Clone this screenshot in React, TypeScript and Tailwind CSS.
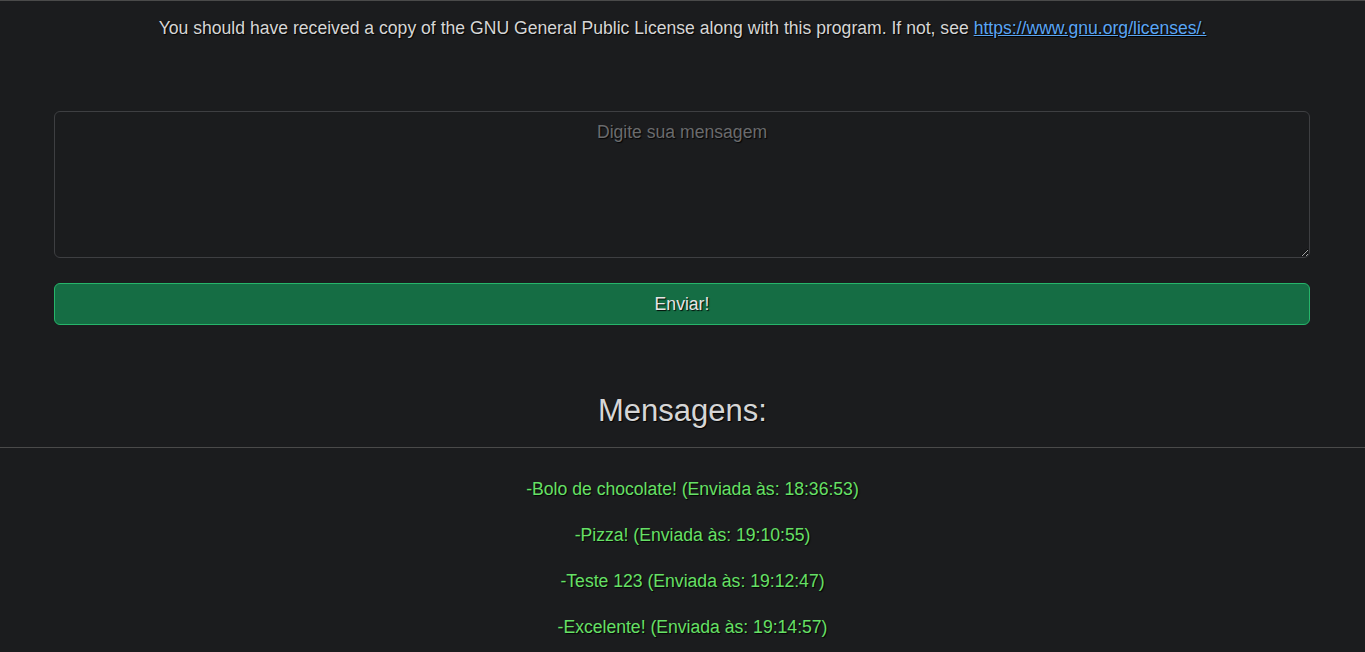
import React from "react";

const msgs = [
  "-Bolo de chocolate! (Enviada às: 18:36:53)",
  "-Pizza! (Enviada às: 19:10:55)",
  "-Teste 123 (Enviada às: 19:12:47)",
  "-Excelente! (Enviada às: 19:14:57)",
];

export default function App() {
  return (
    <div
      className="min-h-screen bg-[#1b1c1e] text-center text-[#d6d6d6] [color-scheme:dark] overflow-hidden"
      style={{ fontFamily: '"Liberation Sans", Arial, sans-serif' }}
    >
      <div className="h-px bg-[#4a4a4a]" />
      <p className="mt-[17px] text-[17.6px] leading-[20px] [text-shadow:1px_1px_1px_rgba(0,0,0,0.9)]">
        You should have received a copy of the GNU General Public License along with this program. If not, see{" "}
        <a href="#" className="text-[#5aa6f5] underline">
          https://www.gnu.org/licenses/.
        </a>
      </p>
      <div className="pl-[54px] pr-[55px]">
        <textarea
          placeholder="Digite sua mensagem"
          className="mt-[73px] block w-full h-[147px] rounded-md border border-[#3e3f42] bg-[#1b1c1e] pt-[8px] px-3 text-center text-[17.6px] leading-[24px] text-[#d6d6d6] placeholder:text-[#6a6b6d] outline-none [text-shadow:1px_1px_1px_rgba(0,0,0,0.9)]"
        />
        <button className="mt-[25px] block w-full h-[42px] rounded-md border border-[#26b56a] bg-[#156d44] text-[17.6px] leading-[20px] text-[#e6e6e6] [text-shadow:1px_1px_1px_rgba(0,0,0,0.9)]">
          Enviar!
        </button>
      </div>
      <h2 className="mt-[67px] text-[31px] leading-[38px] text-[#d6d6d6] [text-shadow:1px_1px_1px_rgba(0,0,0,0.9)]">
        Mensagens:
      </h2>
      <div className="mt-[17px] h-px bg-[#4a4a4a]" />
      <div className="pt-[5px] pl-[20px]">
        {msgs.map((m) => (
          <p
            key={m}
            className="mt-[26px] text-[17.6px] leading-[20px] text-[#66e066] [text-shadow:1px_1px_1px_rgba(0,0,0,0.9)]"
          >
            {m}
          </p>
        ))}
      </div>
    </div>
  );
}
